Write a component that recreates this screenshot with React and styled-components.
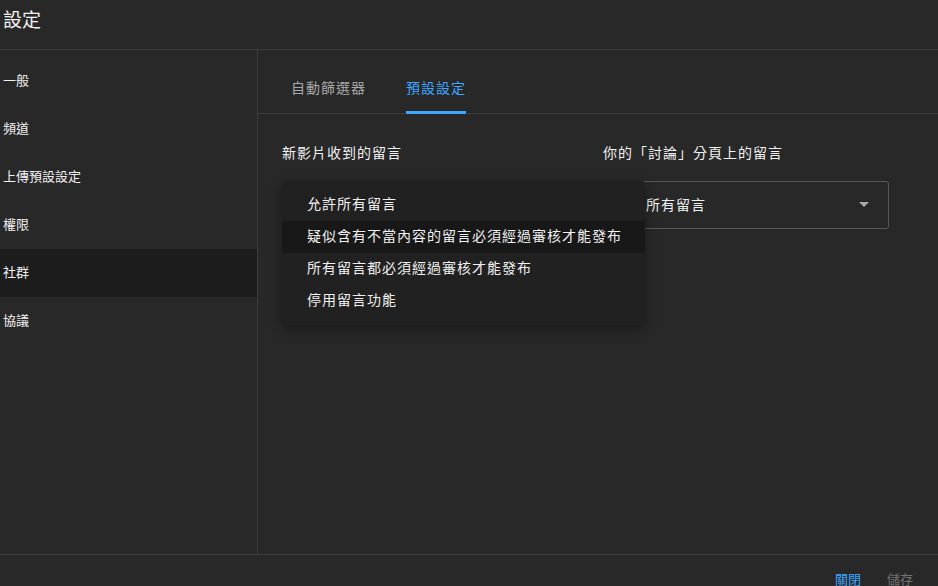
import React from "react";
import styled, { createGlobalStyle } from "styled-components";

const GlobalStyle = createGlobalStyle`
  html, body {
    margin: 0;
    padding: 0;
    background: #282828;
    overflow: hidden;
  }
  body {
    font-family: "Noto Sans CJK TC", "Noto Sans", Roboto, sans-serif;
    color: #f1f1f1;
  }
`;

const Page = styled.div`
  width: 938px;
  height: 586px;
  display: flex;
  flex-direction: column;
  background: #282828;
`;

const Header = styled.div`
  height: 37px;
  padding: 0 0 12px 3px;
  display: flex;
  align-items: center;
  font-size: 19px;
  line-height: 19px;
  margin-top: -2px;
  padding-top: 2px;
  border-bottom: 1px solid #3d3d3d;
`;

const Body = styled.div`
  flex: 1;
  display: flex;
  min-height: 0;
`;

const Sidebar = styled.div`
  width: 257px;
  padding-top: 7px;
  border-right: 1px solid #3d3d3d;
`;

const NavItem = styled.div`
  height: 48px;
  display: flex;
  align-items: center;
  padding: 0 0 3px 3px;
  box-sizing: border-box;
  font-size: 13px;
  color: #f1f1f1;
  background: ${(p) => (p.$active ? "#1c1c1c" : "transparent")};
`;

const Main = styled.div`
  flex: 1;
  display: flex;
  flex-direction: column;
`;

const TabBar = styled.div`
  height: 63px;
  display: flex;
  align-items: flex-end;
  gap: 40px;
  padding-left: 33px;
  border-bottom: 1px solid #3d3d3d;
`;

const Tab = styled.div`
  height: 51px;
  display: flex;
  align-items: flex-start;
  padding-top: 14px;
  box-sizing: border-box;
  font-size: 14px;
  letter-spacing: 1px;
  color: ${(p) => (p.$active ? "#3ea6ff" : "#aaaaaa")};
  border-bottom: 3px solid ${(p) => (p.$active ? "#3ea6ff" : "transparent")};
  margin-bottom: -1px;
`;

const Content = styled.div`
  display: flex;
  gap: 35px;
  padding: 28px 0 0 24px;
`;

const Field = styled.div`
  width: 286px;
  display: flex;
  flex-direction: column;
`;

const Label = styled.div`
  font-size: 14px;
  letter-spacing: 1px;
  color: #f1f1f1;
  height: 20px;
  line-height: 20px;
  margin-bottom: 19px;
`;

const SelectWrap = styled.div`
  position: relative;
`;

const SelectBox = styled.div`
  height: 46px;
  border: 1px solid #575757;
  border-radius: 3px;
  display: flex;
  align-items: center;
  justify-content: space-between;
  padding: 0 19px 3px 12px;
  box-sizing: border-box;
  height: 48px;
  font-size: 14px;
  letter-spacing: 1px;
  color: #f1f1f1;
`;

const Caret = styled.span`
  width: 0;
  height: 0;
  margin-top: 2px;
  border-left: 5px solid transparent;
  border-right: 5px solid transparent;
  border-top: 5px solid #aaaaaa;
`;

const Menu = styled.div`
  position: absolute;
  top: 0;
  left: 0;
  width: 363px;
  padding: 8px 0;
  background: #212121;
  border-radius: 3px;
  box-shadow: 0 4px 12px rgba(0, 0, 0, 0.35);
  z-index: 2;
`;

const MenuItem = styled.div`
  height: 32px;
  box-sizing: border-box;
  display: flex;
  align-items: center;
  padding: 0 0 4px 25px;
  font-size: 14px;
  letter-spacing: 1px;
  color: #f1f1f1;
  background: ${(p) => (p.$hover ? "#181818" : "transparent")};
`;

const Footer = styled.div`
  height: 31px;
  border-top: 1px solid #3d3d3d;
  display: flex;
  justify-content: flex-end;
  align-items: flex-end;
  gap: 26px;
  padding-right: 25px;
`;

const FooterButton = styled.div`
  font-size: 13px;
  line-height: 13px;
  margin-bottom: 1px;
  color: ${(p) => (p.$primary ? "#3ea6ff" : "#717171")};
`;

const navItems = ["一般", "頻道", "上傳預設設定", "權限", "社群", "協議"];
const options = [
  "允許所有留言",
  "疑似含有不當內容的留言必須經過審核才能發布",
  "所有留言都必須經過審核才能發布",
  "停用留言功能",
];

export default function App() {
  return (
    <>
      <GlobalStyle />
      <Page>
        <Header>設定</Header>
        <Body>
          <Sidebar>
            {navItems.map((n) => (
              <NavItem key={n} $active={n === "社群"}>
                {n}
              </NavItem>
            ))}
          </Sidebar>
          <Main>
            <TabBar>
              <Tab>自動篩選器</Tab>
              <Tab $active>預設設定</Tab>
            </TabBar>
            <Content>
              <Field>
                <Label>新影片收到的留言</Label>
                <SelectWrap>
                  <SelectBox>
                    允許所有留言
                    <Caret />
                  </SelectBox>
                  <Menu>
                    {options.map((o, i) => (
                      <MenuItem key={o} $hover={i === 1}>
                        {o}
                      </MenuItem>
                    ))}
                  </Menu>
                </SelectWrap>
              </Field>
              <Field>
                <Label>你的「討論」分頁上的留言</Label>
                <SelectWrap>
                  <SelectBox>
                    允許所有留言
                    <Caret />
                  </SelectBox>
                </SelectWrap>
              </Field>
            </Content>
          </Main>
        </Body>
        <Footer>
          <FooterButton $primary>關閉</FooterButton>
          <FooterButton>儲存</FooterButton>
        </Footer>
      </Page>
    </>
  );
}
